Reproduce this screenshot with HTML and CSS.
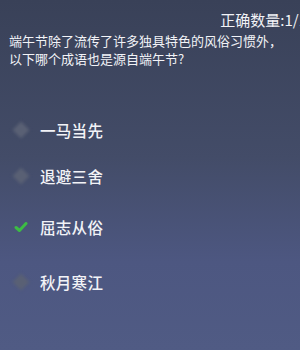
FILE: index.html
```html
<!DOCTYPE html>
<html lang="zh">
<head>
    <meta charset="UTF-8">
    <meta name="viewport" content="width=device-width, initial-scale=1.0">
    <title>端午节答题</title>
    <link rel="stylesheet" href="styles.css">
</head>
<body>
    <div class="quiz">
        <div class="score">正确数量:1/1</div>
        <p class="question">端午节除了流传了许多独具特色的风俗习惯外，<br>以下哪个成语也是源自端午节?</p>
        <ul class="options">
            <li class="option">
                <span class="mark"></span>
                <span class="label">一马当先</span>
            </li>
            <li class="option">
                <span class="mark"></span>
                <span class="label">退避三舍</span>
            </li>
            <li class="option correct">
                <span class="mark">
                    <svg width="16" height="14" viewBox="0 0 16 14">
                        <path d="M3 7.5 L6.5 10.5 L13 3.5" fill="none" stroke="#3cbc44" stroke-width="3" stroke-linecap="round" stroke-linejoin="round"/>
                    </svg>
                </span>
                <span class="label">屈志从俗</span>
            </li>
            <li class="option">
                <span class="mark"></span>
                <span class="label">秋月寒江</span>
            </li>
        </ul>
    </div>
</body>
</html>
```

FILE: styles.css
```css
body, html {
    margin: 0;
    padding: 0;
    height: 100%;
    overflow: hidden;
}

body {
    font-family: "Noto Sans CJK SC", "Noto Sans", sans-serif;
    color: #f2f3f7;
    background: linear-gradient(to bottom, #394158 0%, #434c68 45%, #4d5781 75%, #505b84 100%);
}

.quiz {
    padding: 10px 0 0 9px;
}

.score {
    text-align: right;
    font-size: 15px;
    line-height: 20px;
    white-space: nowrap;
    margin-right: -7px;
}

.question {
    margin: 2px 0 0 0;
    font-size: 13px;
    line-height: 18px;
}

.options {
    list-style: none;
    margin: 0;
    padding: 0;
}

.option {
    display: flex;
    align-items: center;
    height: 24px;
}

.option:nth-child(1) { margin-top: 50px; }
.option:nth-child(2) { margin-top: 22px; }
.option:nth-child(3) { margin-top: 27px; }
.option:nth-child(4) { margin-top: 31px; }

.mark {
    width: 22px;
    height: 22px;
    display: flex;
    align-items: center;
    justify-content: center;
    margin-right: 8px;
    margin-left: 1px;
    filter: blur(0.6px);
}

.mark::before {
    content: "";
    width: 12px;
    height: 12px;
    background: #596074;
    transform: rotate(45deg);
    filter: blur(1.6px);
}

.correct .mark::before {
    display: none;
}

.label {
    font-size: 15.5px;
    font-weight: 500;
    letter-spacing: 0.3px;
}
```
